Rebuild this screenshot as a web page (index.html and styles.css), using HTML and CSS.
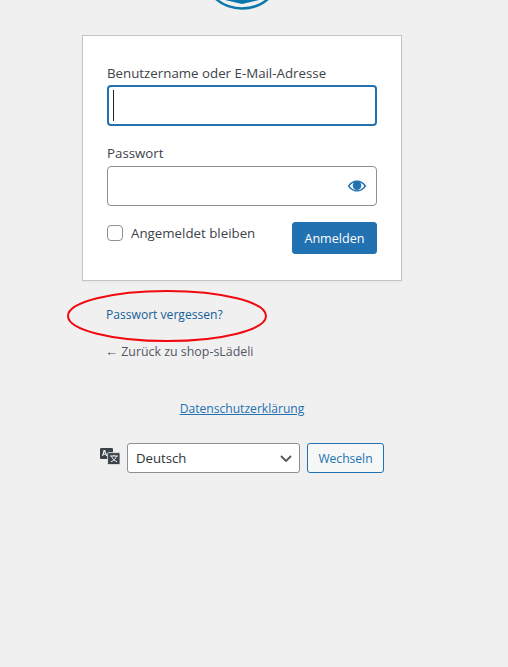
FILE: index.html
```html
<!DOCTYPE html>
<html lang="de">
<head>
	<meta charset="UTF-8"/>
	<title>Anmelden</title>
	<link rel="stylesheet" href="styles.css">
</head>
<body>
<div id="login">
	<div class="logo">
		<svg width="84" height="84" viewBox="0 0 84 84">
			<circle cx="42" cy="42" r="40.5" fill="none" stroke="#0a76ab" stroke-width="2.4"/>
			<path d="M25 74 L59 74 L50 60 C47 56 37 56 34 60 Z" fill="#0a76ab"/>
			<path d="M25 74 L42 78 L59 74 L50 66 L34 66 Z" fill="#0a76ab"/>
		</svg>
	</div>
	<form class="card">
		<label class="lbl" for="user">Benutzername oder E-Mail-Adresse</label>
		<div class="input focus"><span class="caret"></span></div>
		<label class="lbl pw-lbl" for="pass">Passwort</label>
		<div class="input">
			<svg class="eye" width="20" height="20" viewBox="0 0 20 20">
				<path fill="#2271b1" d="M10 4.500c-4.200 0-7.600 2.700-9.200 5.500 1.600 2.800 5 5.500 9.200 5.500s7.600-2.700 9.200-5.500C17.600 7.200 14.200 4.500 10 4.500zM10 14.300c-3.100 0-5.800-1.800-7.300-4.300 1-1.600 2.400-2.800 4.100-3.600-.7.800-1.100 1.900-1.100 3.100 0 2.500 1.900 4.500 4.300 4.500s4.300-2 4.300-4.500c0-1.200-.4-2.300-1.100-3.100 1.700.8 3.100 2 4.100 3.600-1.500 2.500-4.200 4.300-7.300 4.300z"/>
				<circle cx="10" cy="9" r="2" fill="#2271b1"/>
			</svg>
		</div>
		<div class="row">
			<label class="remember"><span class="check"></span>Angemeldet bleiben</label>
			<button class="btn" type="button">Anmelden</button>
		</div>
	</form>
	<p class="nav"><a href="#">Passwort vergessen?</a></p>
	<p class="back"><a href="#"><span class="arrow">←</span> Zurück zu shop-sLädeli</a></p>
	<svg class="circle" width="200" height="52" viewBox="0 0 200 52">
		<ellipse cx="100" cy="26" rx="99" ry="25" fill="none" stroke="#f00a0f" stroke-width="2"/>
	</svg>
</div>
<div class="privacy"><a href="#">Datenschutzerklärung</a></div>
<div class="lang">
	<svg class="lang-icon" width="20" height="17" viewBox="0 0 20 17">
		<rect fill="#3c434a" x="0" y="0" width="13" height="11" rx="1.200"/>
		<path fill="#f0f0f1" d="M3.600 2h1.500l2.200 6H6.100l-.4-1.200H3.500L3.100 8H2zM3.900 5.800h1.400l-.7-2.100z"/>
		<rect fill="#3c434a" stroke="#f0f0f1" stroke-width=".8" x="7.600" y="4.600" width="12.400" height="12" rx="1.200"/>
		<path fill="none" stroke="#f0f0f1" stroke-width="1" d="M10 8h8M14 6.800v1.200M16.400 8c-.5 2.500-2.500 4.500-5.400 5.800M11.600 8c.5 2.500 2.500 4.500 5.400 5.800"/>
	</svg>
	<div class="select">Deutsch
		<svg width="14" height="14" viewBox="0 0 14 14"><path d="M2 5l5 5 5-5" fill="none" stroke="#50575e" stroke-width="1.800"/></svg>
	</div>
	<button class="btn2" type="button">Wechseln</button>
</div>
</body>
</html>
```

FILE: styles.css
```css
*{
	box-sizing:border-box;
}
html,body{
	margin:0;
	padding:0;
}
body{
	background:#f0f0f1;
	color:#3c434a;
	font-family:"Open Sans","Noto Sans",sans-serif;
	font-size:12.1px;
	height:667px;
	overflow:hidden;
}
a{
	color:inherit;
	text-decoration:none;
}
#login{
	position:relative;
	width:320px;
	margin-left:82px;
}
.logo{
	height:35px;
	overflow:hidden;
	display:flex;
	justify-content:center;
	align-items:flex-start;
}
.logo svg{
	flex:none;
	margin-top:-74px;
}
.card{
	height:246px;
	padding:27px 24px 0;
	background:#fff;
	border:1px solid #c3c4c7;
	box-shadow:0 1px 3px rgba(0,0,0,.04);
}
.lbl{
	display:block;
	font-size:13.3px;
	line-height:21px;
	margin-bottom:1px;
}
.pw-lbl{
	margin-top:17px;
	margin-bottom:2px;
}
.input{
	height:40px;
	width:270px;
	border:1px solid #8c8f94;
	border-radius:4px;
	background:#fff;
	display:flex;
	align-items:center;
	justify-content:flex-end;
	padding-right:9px;
}
.input.focus{
	height:41px;
	justify-content:flex-start;
	border:2px solid #2271b1;
	padding:0 0 0 4px;
}
.caret{
	width:1px;
	height:31px;
	background:#1d2327;
}
.row{
	display:flex;
	justify-content:space-between;
	align-items:flex-start;
	margin-top:16px;
}
.remember{
	display:flex;
	align-items:center;
	gap:8px;
	font-size:13.3px;
	height:22px;
}
.check{
	width:16px;
	height:16px;
	border:1px solid #8c8f94;
	border-radius:4px;
	background:#fff;
}
.btn{
	width:85px;
	height:32px;
	background:#2271b1;
	color:#fff;
	border:1px solid #2271b1;
	border-radius:3px;
	font:12.6px "Open Sans","Noto Sans",sans-serif;
	padding:0;
}
.nav,.back{
	margin:0;
	padding-left:24px;
	line-height:20px;
}
.nav{
	margin-top:24px;
	color:#135e96;
}
.back{
	margin-top:17px;
	color:#50575e;
	font-size:12.4px;
}
.arrow{
	font-family:"Liberation Sans",sans-serif;
	font-size:13px;
	margin-left:-1px;
}
.circle{
	position:absolute;
	left:-15px;
	top:290px;
}
.privacy{
	margin-top:37px;
	text-align:center;
	width:484px;
	line-height:20px;
}
.privacy a{
	color:#2271b1;
	text-decoration:underline;
}
.lang{
	display:flex;
	align-items:center;
	margin-top:24px;
	margin-left:100px;
}
.lang-icon{
	margin-right:7px;
	margin-bottom:3px;
}
.select{
	width:173px;
	height:30px;
	border:1px solid #8c8f94;
	border-radius:3px;
	background:#fff;
	color:#2c3338;
	font-size:13.2px;
	line-height:28px;
	padding-left:8px;
	display:flex;
	justify-content:space-between;
	align-items:center;
}
.select svg{
	margin-right:6px;
}
.btn2{
	width:77px;
	height:30px;
	margin-left:7px;
	background:#f6f7f7;
	color:#2271b1;
	border:1px solid #2271b1;
	border-radius:3px;
	font:12.1px "Open Sans","Noto Sans",sans-serif;
	padding:0;
}
```
